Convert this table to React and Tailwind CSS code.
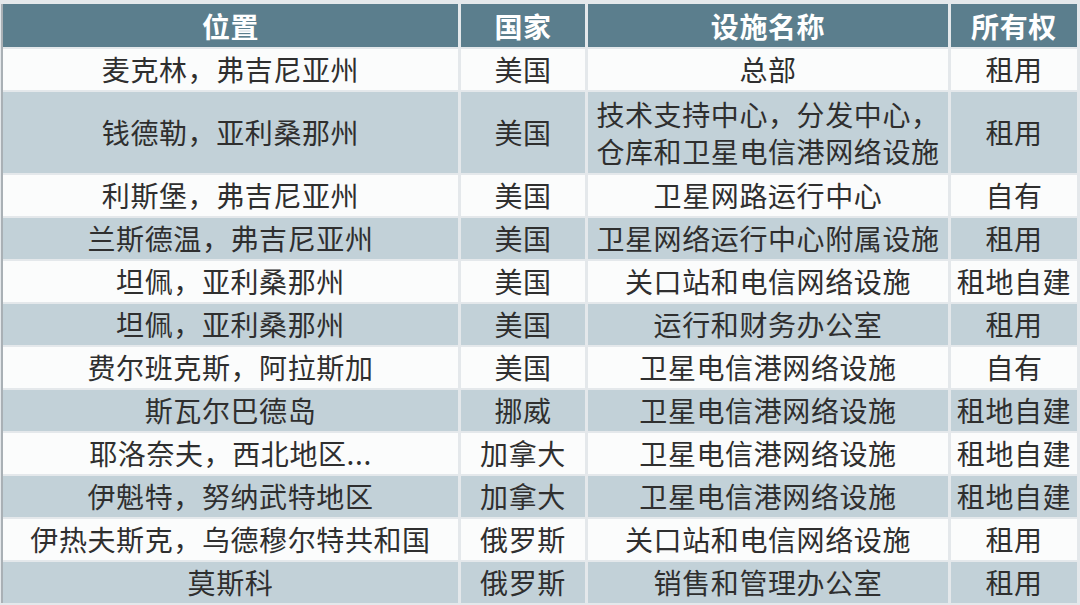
import React from "react";

const rows = [
  ["麦克林，弗吉尼亚州", "美国", ["总部"], "租用"],
  ["钱德勒，亚利桑那州", "美国", ["技术支持中心，分发中心，", "仓库和卫星电信港网络设施"], "租用"],
  ["利斯堡，弗吉尼亚州", "美国", ["卫星网路运行中心"], "自有"],
  ["兰斯德温，弗吉尼亚州", "美国", ["卫星网络运行中心附属设施"], "租用"],
  ["坦佩，亚利桑那州", "美国", ["关口站和电信网络设施"], "租地自建"],
  ["坦佩，亚利桑那州", "美国", ["运行和财务办公室"], "租用"],
  ["费尔班克斯，阿拉斯加", "美国", ["卫星电信港网络设施"], "自有"],
  ["斯瓦尔巴德岛", "挪威", ["卫星电信港网络设施"], "租地自建"],
  ["耶洛奈夫，西北地区...", "加拿大", ["卫星电信港网络设施"], "租地自建"],
  ["伊魁特，努纳武特地区", "加拿大", ["卫星电信港网络设施"], "租地自建"],
  ["伊热夫斯克，乌德穆尔特共和国", "俄罗斯", ["关口站和电信网络设施"], "租用"],
  ["莫斯科", "俄罗斯", ["销售和管理办公室"], "租用"],
];

const Cell = ({ children, bg, tall }) => (
  <div
    className={`${bg} ${tall ? "h-[81px]" : "h-[41px]"} flex flex-col items-center justify-center text-[28px] leading-[37px] tracking-[0.6px] text-[#2f2f2f] whitespace-nowrap overflow-hidden`}
  >
    {children}
  </div>
);

export default function App() {
  return (
    <div
      className="w-[1080px] h-[605px] bg-[#e4e8eb] pt-[4px] pl-[3px] pr-[3px] overflow-hidden"
      style={{ fontFamily: '"Noto Sans CJK SC", "Noto Sans", sans-serif' }}
    >
      <div className="border-l-2 border-[#a9b0b5] -ml-[2px]">
        <div className="grid grid-cols-[455px_124px_360px_126px] gap-x-[3px] gap-y-[2px]">
          {["位置", "国家", "设施名称", "所有权"].map((h) => (
            <div
              key={h}
              className="h-[43px] bg-[#5b7e8d] flex items-center justify-center text-white font-bold text-[28px] tracking-[0.6px]"
            >
              {h}
            </div>
          ))}
          {rows.map((r, i) => {
            const bg = i % 2 === 0 ? "bg-[#fbfcfc]" : "bg-[#c2d1d8]";
            const tall = r[2].length > 1;
            return (
              <React.Fragment key={i}>
                <Cell bg={bg} tall={tall}>{r[0]}</Cell>
                <Cell bg={bg} tall={tall}>{r[1]}</Cell>
                <Cell bg={bg} tall={tall}>
                  {r[2].map((t) => (
                    <span key={t}>{t}</span>
                  ))}
                </Cell>
                <Cell bg={bg} tall={tall}>{r[3]}</Cell>
              </React.Fragment>
            );
          })}
        </div>
      </div>
    </div>
  );
}
